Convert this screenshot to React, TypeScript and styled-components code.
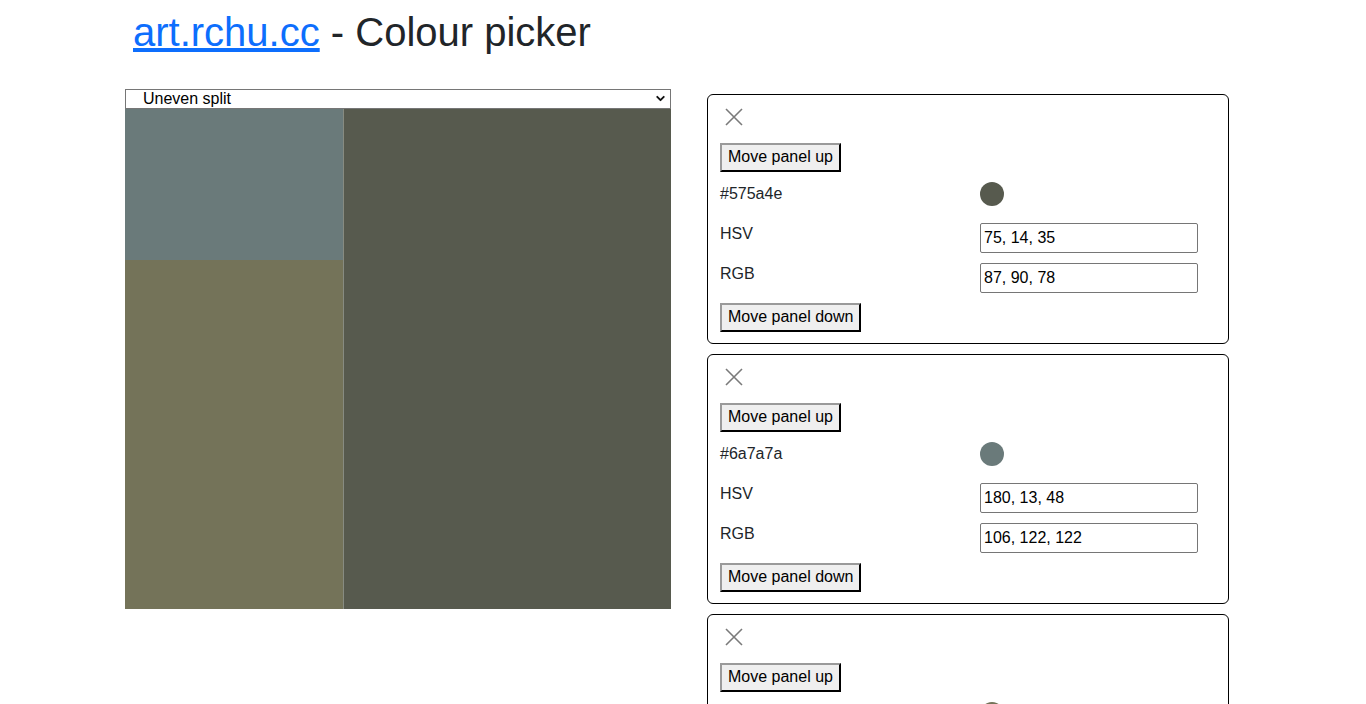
import * as React from "react";
import styled, { createGlobalStyle } from "styled-components";
import { ChevronDown } from "lucide-react";

const GlobalStyle = createGlobalStyle`
  body {
    margin: 0;
    font-family: "Liberation Sans", Arial, sans-serif;
    color: #212529;
    background: #fff;
  }
`;

interface ColourEntry {
  hex: string;
  hsv: string;
  rgb: string;
}

const colours: ColourEntry[] = [
  { hex: "#575a4e", hsv: "75, 14, 35", rgb: "87, 90, 78" },
  { hex: "#6a7a7a", hsv: "180, 13, 48", rgb: "106, 122, 122" },
  { hex: "#747359", hsv: "58, 23, 45", rgb: "116, 115, 89" },
];

const CloseIcon = () => (
  <svg width="18" height="18" viewBox="0 0 18 18">
    <path d="M1 1 L17 17 M17 1 L1 17" stroke="#7a7a7a" strokeWidth="1.6" fill="none" />
  </svg>
);

const Panel: React.FC<{ entry: ColourEntry }> = ({ entry }) => (
  <PanelBox>
    <CloseButton aria-label="Close">
      <CloseIcon />
    </CloseButton>
    <div>
      <PanelButton>Move panel up</PanelButton>
    </div>
    <HexRow>
      <HexLabel>{entry.hex}</HexLabel>
      <Swatch $colour={entry.hex} />
    </HexRow>
    <InfoRow>
      <Label>HSV</Label>
      <ValueInput defaultValue={entry.hsv} />
    </InfoRow>
    <InfoRow>
      <Label>RGB</Label>
      <ValueInput defaultValue={entry.rgb} />
    </InfoRow>
    <div>
      <PanelButton>Move panel down</PanelButton>
    </div>
  </PanelBox>
);

export default function App() {
  return (
    <>
      <GlobalStyle />
      <Container>
        <Heading>
          <a href="#">art.rchu.cc</a> - Colour picker
        </Heading>
        <Row>
          <LeftColumn>
            <SelectWrap>
              <SplitSelect defaultValue="uneven">
                <option value="uneven">Uneven split</option>
                <option value="even">Even split</option>
              </SplitSelect>
              <SelectArrow>
                <ChevronDown size={13} strokeWidth={3.5} color="#111" />
              </SelectArrow>
            </SelectWrap>
            <Canvas>
              <CanvasLeft>
                <Block $colour="#6a7a7a" $height={151} />
                <Block $colour="#747359" $height={349} />
              </CanvasLeft>
              <CanvasRight />
            </Canvas>
          </LeftColumn>
          <RightColumn>
            {colours.map((c) => (
              <Panel key={c.hex} entry={c} />
            ))}
          </RightColumn>
        </Row>
      </Container>
    </>
  );
}

const Container = styled.div`
  width: 1116px;
  margin: 0 auto;
  padding: 0 12px;
`;

const Heading = styled.h1`
  margin: 8px 0 0;
  padding-left: 8px;
  font-size: 40px;
  font-weight: 400;
  line-height: 48px;
  color: #212529;
  a {
    color: #0d6efd;
    text-decoration: underline;
  }
`;

const Row = styled.div`
  display: grid;
  grid-template-columns: 546px 522px;
  column-gap: 36px;
  margin-top: 33px;
  align-items: start;
`;

const LeftColumn = styled.div`
  display: flex;
  flex-direction: column;
`;

const SelectWrap = styled.div`
  position: relative;
  height: 20px;
`;

const SplitSelect = styled.select`
  appearance: none;
  -webkit-appearance: none;
  display: block;
  width: 546px;
  height: 20px;
  box-sizing: border-box;
  margin: 0;
  padding: 0 0 1px 17px;
  border: 1px solid #767676;
  border-radius: 0;
  background: #fff;
  font-family: "Liberation Sans", Arial, sans-serif;
  font-size: 16px;
  line-height: 17px;
  color: #000;
`;

const SelectArrow = styled.span`
  position: absolute;
  right: 4px;
  top: 3px;
  display: flex;
  pointer-events: none;
`;

const Canvas = styled.div`
  display: flex;
  height: 500px;
`;

const CanvasLeft = styled.div`
  width: 218px;
  display: flex;
  flex-direction: column;
  border-right: 1px solid #878b81;
`;

const Block = styled.div<{ $colour: string; $height: number }>`
  background: ${(p) => p.$colour};
  height: ${(p) => p.$height}px;
`;

const CanvasRight = styled.div`
  flex: 1;
  background: #575a4e;
`;

const RightColumn = styled.div`
  display: flex;
  flex-direction: column;
  gap: 10px;
  padding-top: 5px;
`;

const PanelBox = styled.div`
  border: 1px solid #000;
  border-radius: 6px;
  padding: 10px 12px 11px;
  display: flex;
  flex-direction: column;
  gap: 10px;
`;

const CloseButton = styled.button`
  width: 28px;
  height: 28px;
  padding: 0;
  border: none;
  background: transparent;
  display: flex;
  align-items: flex-start;
  justify-content: center;
  svg {
    margin-top: 3px;
  }
`;

const PanelButton = styled.button`
  height: 29px;
  padding: 0 6px 1px;
  border: 2px outset #555;
  border-color: #9a9a9a #3a3a3a #3a3a3a #9a9a9a;
  background: #efefef;
  font-family: "Liberation Sans", Arial, sans-serif;
  font-size: 16px;
  color: #000;
`;

const InfoRow = styled.div`
  display: grid;
  grid-template-columns: 260px 1fr;
  align-items: start;
`;

const HexRow = styled(InfoRow)`
  min-height: 31px;
`;

const Label = styled.span`
  font-size: 16px;
  line-height: 20px;
  padding-top: 1px;
`;

const HexLabel = styled(Label)`
  line-height: 24px;
  padding-top: 0;
`;

const Swatch = styled.div<{ $colour: string }>`
  width: 24px;
  height: 24px;
  border-radius: 50%;
  background: ${(p) => p.$colour};
`;

const ValueInput = styled.input`
  width: 218px;
  height: 30px;
  box-sizing: border-box;
  padding: 0 3px 1px;
  border: 1px solid #767676;
  border-radius: 2px;
  font-family: "Liberation Sans", Arial, sans-serif;
  font-size: 16px;
  color: #000;
`;
